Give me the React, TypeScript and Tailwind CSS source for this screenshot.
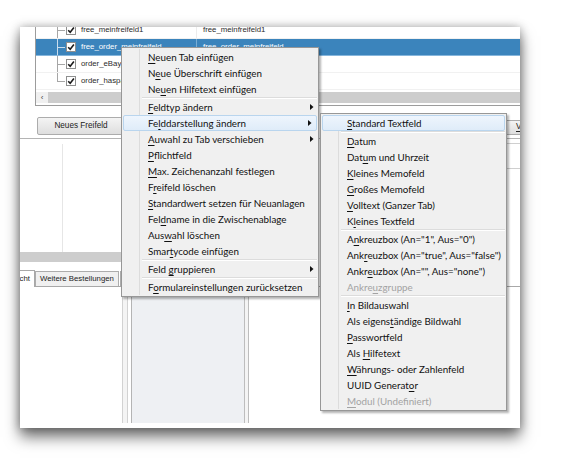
import React from "react";

type Entry =
  | { label: string; arrow?: boolean; active?: boolean; disabled?: boolean }
  | "sep";

const mainItems: Entry[] = [
  { label: "&Neuen Tab einfügen" },
  { label: "N&eue Überschrift einfügen" },
  { label: "Ne&uen Hilfetext einfügen" },
  "sep",
  { label: "&Feldtyp ändern", arrow: true },
  { label: "Fe&lddarstellung ändern", arrow: true, active: true },
  { label: "&Auwahl zu Tab verschieben", arrow: true },
  { label: "&Pflichtfeld" },
  { label: "&Max. Zeichenanzahl festlegen" },
  { label: "F&reifeld löschen" },
  { label: "&Standardwert setzen für Neuanlagen" },
  { label: "Fel&dname in die Zwischenablage" },
  { label: "Aus&wahl löschen" },
  { label: "Smar&tycode einfügen" },
  "sep",
  { label: "Feld &gruppieren", arrow: true },
  "sep",
  { label: "F&ormulareinstellungen zurücksetzen" },
];

const subItems: Entry[] = [
  { label: "&Standard Textfeld", active: true },
  "sep",
  { label: "&Datum" },
  { label: "Dat&um und Uhrzeit" },
  { label: "&Kleines Memofeld" },
  { label: "&Großes Memofeld" },
  { label: "&Volltext (Ganzer Tab)" },
  { label: "K&leines Textfeld" },
  "sep",
  { label: 'A&nkreuzbox (An="1", Aus="0")' },
  { label: 'Ank&reuzbox (An="true", Aus="false")' },
  { label: 'Ankr&euzbox (An="", Aus="none")' },
  { label: "Ankre&uzgruppe", disabled: true },
  "sep",
  { label: "&In Bildauswahl" },
  { label: "Als eigens&tändige Bildwahl" },
  { label: "&Passwortfeld" },
  { label: "Als &Hilfetext" },
  { label: "&Währungs- oder Zahlenfeld" },
  { label: "UUID Generat&or" },
  { label: "&Modul (Undefiniert)", disabled: true },
];

// "&" marks the access key letter
function Mnemonic({ text }: { text: string }) {
  const i = text.indexOf("&");
  if (i < 0) return <>{text}</>;
  return (
    <>
      {text.slice(0, i)}
      <u className="underline-offset-[1.5px]">{text[i + 1]}</u>
      {text.slice(i + 2)}
    </>
  );
}

function Menu({ items, className }: { items: Entry[]; className: string }) {
  return (
    <div
      className={`absolute border border-[#979797] bg-[#f0f0f0] py-px font-['Lato',sans-serif] text-[9.8px] text-[#111] shadow-[2px_2px_2px_rgba(0,0,0,0.3)] ${className}`}
    >
      {items.map((it, idx) =>
        it === "sep" ? (
          <div key={idx} className="flex h-[2px]">
            <div className="w-[18px] shrink-0 border-r border-[#dcdcdc]" />
            <div className="ml-[2px] mr-px flex-1 border-t border-b border-t-[#dcdcdc] border-b-white" />
          </div>
        ) : (
          <div
            key={idx}
            className={`flex h-[16px] items-center ${
              it.active
                ? "mx-px rounded-[2px] border border-[#b9d5ee] bg-gradient-to-b from-[#eef5fd] to-[#dfecf9]"
                : ""
            }`}
          >
            <div
              className={`h-full shrink-0 ${
                it.active ? "w-[16px]" : "w-[18px] border-r border-[#dcdcdc]"
              }`}
            />
            <span
              className={`pl-[8px] whitespace-nowrap ${it.disabled ? "text-[#a3a3a3]" : ""}`}
            >
              <Mnemonic text={it.label} />
            </span>
            {it.arrow && (
              <svg className="ml-auto mr-[4px]" width="4" height="6" viewBox="0 0 4 6">
                <polygon points="0,0 3.5,3 0,6" fill="#111" />
              </svg>
            )}
          </div>
        )
      )}
    </div>
  );
}

function Connector({ last, light }: { last?: boolean; light?: boolean }) {
  const c = light ? "#c9dced" : "#a6a6a6";
  return (
    <svg width="9" height="17" viewBox="0 0 9 17" className="shrink-0">
      <line x1="0.5" y1="0" x2="0.5" y2={last ? 8.5 : 17} stroke={c} />
      <line x1="0" y1="8.5" x2="8" y2="8.5" stroke={c} />
    </svg>
  );
}

function Check() {
  return (
    <svg width="10" height="10" viewBox="0 0 10 10" className="shrink-0">
      <rect x="0.5" y="0.5" width="9" height="9" fill="#fff" stroke="#8e8f8f" />
      <path d="M2.2 5.2 L4.2 7.2 L7.9 2.6" fill="none" stroke="#1b1b1b" strokeWidth="1.6" />
    </svg>
  );
}

const rows = [
  { a: "free_meinfreifeld1", b: "free_meinfreifeld1" },
  { a: "free_order_meinfreifeld", b: "free_order_meinfreifeld", sel: true },
  { a: "order_eBay_meinfreifeld", b: "order_eBay_meinfreifeld" },
  { a: "order_haspa_meinfreifeld", b: "order_haspa_meinfreifeld", last: true },
];

export default function App() {
  return (
    <div className="h-[475px] w-[582px] overflow-hidden bg-white pl-[20px] pt-[27px]">
      <div className="h-[401px] w-[500px] overflow-hidden bg-white font-['Liberation_Sans',Arial,sans-serif] shadow-[0_9px_14px_rgba(0,0,0,0.55),0_0_9px_rgba(0,0,0,0.3)]">
        {/* field tree + buttons */}
        <div className="h-[117px] border-b border-[#b4b4b4]">
          <div className="-mt-[5px] ml-[15px] h-[84px] border-b border-l border-[#9c9c9c]">
            {rows.map((r) => (
              <div
                key={r.a}
                className={`flex h-[17px] items-center text-[7.8px] ${
                  r.sel
                    ? "border-b border-[#86b6dc] bg-[#3b84bc] text-white"
                    : "border-b border-[#f1f1f1] text-[#2b2b2b]"
                }`}
              >
                <div
                  className={`flex h-full w-[161px] shrink-0 items-center overflow-hidden whitespace-nowrap border-r ${
                    r.sel ? "border-[#7aaed6]" : "border-[#ececec]"
                  }`}
                >
                  <div className="w-[21px] shrink-0" />
                  <Connector last={r.last} light={r.sel} />
                  <Check />
                  <span className="ml-[5px]">{r.a}</span>
                </div>
                <span className="whitespace-nowrap pl-[6px]">{r.b}</span>
              </div>
            ))}
            <div className="mt-[2px] flex h-[11px]">
              <div className="flex w-[12px] items-center justify-center bg-[#f0f0f0] text-[8px] leading-none text-[#444]">
                ‹
              </div>
              <div className="flex-1 bg-[#cdcdcd]" />
            </div>
          </div>
          <div className="mt-[11px] flex items-start">
            <div className="ml-[17px] flex h-[18px] w-[88px] shrink-0 items-center justify-center whitespace-nowrap rounded-[2px] border border-[#acacac] bg-gradient-to-b from-[#f4f4f4] to-[#dedede] text-[8.2px] text-[#222]">
              Neues Freifeld
            </div>
            <div className="ml-[376px] mt-[3px] flex h-[15px] w-[60px] shrink-0 items-center whitespace-nowrap rounded-[2px] border border-[#acacac] bg-gradient-to-b from-[#f4f4f4] to-[#dedede] pl-[14px] text-[8.2px] text-[#222]">
              <Mnemonic text="&Vorschau" />
            </div>
          </div>
        </div>

        {/* middle list */}
        <div className="flex h-[133px]">
          <div className="flex w-[228px] flex-col">
            <div className="h-[113px] pt-[5px]">
              <div className="h-full w-[43px] border-r border-[#e6e6e6]" />
            </div>
            <div className="h-[10px] bg-[#cdcdcd]" />
          </div>
          <div className="flex-1">
            <div className="ml-auto mt-[4px] h-[26px] w-[120px] border-y border-[#cfcfcf]" />
          </div>
        </div>

        {/* tabs */}
        <div className="flex h-[15px] items-end border-b border-[#a8a8a8] text-[7.8px] text-[#222]">
          <div className="-mb-px -ml-[28px] flex h-[17px] shrink-0 items-center border border-b-0 border-[#a8a8a8] bg-white px-[4px]">
            Übersicht
          </div>
          <div className="flex h-[15px] shrink-0 items-center border border-b-0 border-[#acacac] bg-[#f0f0f0] px-[4px]">
            Weitere Bestellungen
          </div>
          <div className="ml-px flex h-[15px] shrink-0 items-center border border-b-0 border-[#acacac] bg-[#f0f0f0] px-[4px]">
            Statistik
          </div>
        </div>

        {/* bottom area */}
        <div className="flex h-[136px]">
          <div className="w-[102px]" />
          <div className="flex w-[127px]">
            <div className="w-[6px] border-x border-[#d2d2d2] bg-[#f4f4f4]" />
            <div className="w-[4px] border-r border-[#b4b4b4] bg-white" />
            <div className="flex-1 bg-[#eef0f3]" />
            <div className="w-[5px] border-x border-[#bdbdbd] bg-[#f4f4f4]" />
          </div>
        </div>
      </div>

      <Menu items={mainItems} className="left-[121px] top-[47px] w-[198px]" />
      <Menu items={subItems} className="left-[320px] top-[113px] w-[187px]" />
    </div>
  );
}
